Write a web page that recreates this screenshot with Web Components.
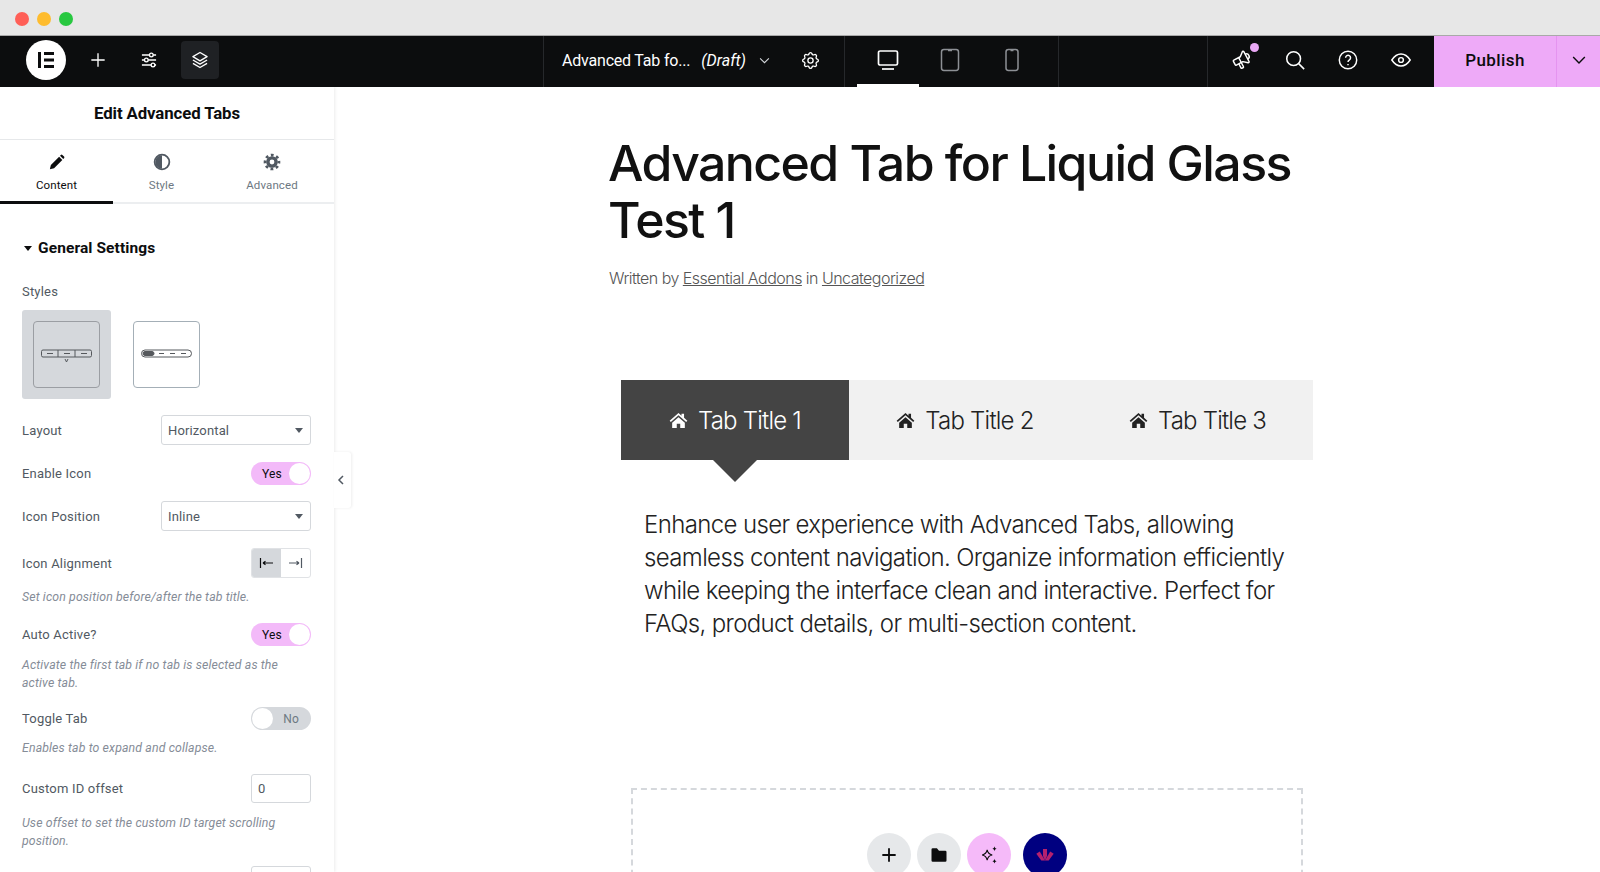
<!DOCTYPE html>
<html lang="en">
<head>
<meta charset="utf-8">
<title>Edit Advanced Tabs</title>
<style>
  html, body { margin: 0; height: 100%; overflow: hidden; background: #fff; }
  body { font-family: "Roboto", "Liberation Sans", sans-serif; display: flex; flex-direction: column; height: 872px; }
</style>
</head>
<body>
<window-bar></window-bar>
<editor-topbar></editor-topbar>
<editor-body>
  <editor-panel slot="panel"></editor-panel>
  <page-preview slot="page"></page-preview>
</editor-body>

<script>
// shared svg icons, all on a 24 box unless they say otherwise
const icons = {
  plus: `<svg viewBox="0 0 24 24" fill="none" stroke="currentColor" stroke-width="1.6"><path d="M12 4v16M4 12h16"/></svg>`,
  sliders: `<svg viewBox="0 0 24 24" fill="none" stroke="currentColor" stroke-width="1.6"><path d="M3.5 6h9M17 6h3.5M3.5 12h3M11 12h9.5M3.5 18h11M19 18h1.5"/><circle cx="14.8" cy="6" r="2.2"/><circle cx="8.8" cy="12" r="2.2"/><circle cx="16.8" cy="18" r="2.2"/></svg>`,
  layers: `<svg viewBox="0 0 24 24" fill="none" stroke="currentColor" stroke-width="1.6" stroke-linejoin="round"><path d="M12 3l8.5 5-8.5 5-8.5-5z"/><path d="M3.5 12l8.5 5 8.5-5"/><path d="M3.5 16l8.5 5 8.5-5"/></svg>`,
  chevron: `<svg viewBox="0 0 24 24" fill="none" stroke="currentColor" stroke-width="1.7"><path d="M5 8.5l7 7 7-7"/></svg>`,
  gear: `<svg viewBox="0 0 24 24" fill="none" stroke="currentColor" stroke-width="1.5"><path d="M10.325 4.317c.426-1.756 2.924-1.756 3.35 0a1.724 1.724 0 0 0 2.573 1.066c1.543-.94 3.31.826 2.37 2.37a1.724 1.724 0 0 0 1.065 2.572c1.756.426 1.756 2.924 0 3.35a1.724 1.724 0 0 0-1.066 2.573c.94 1.543-.826 3.31-2.37 2.37a1.724 1.724 0 0 0-2.572 1.065c-.426 1.756-2.924 1.756-3.35 0a1.724 1.724 0 0 0-2.573-1.066c-1.543.94-3.31-.826-2.37-2.37a1.724 1.724 0 0 0-1.065-2.572c-1.756-.426-1.756-2.924 0-3.35a1.724 1.724 0 0 0 1.066-2.573c-.94-1.543.826-3.31 2.37-2.37c1 .608 2.296.07 2.572-1.065z"/><circle cx="12" cy="12" r="3"/></svg>`,
  desktop: `<svg viewBox="0 0 24 24" fill="none" stroke="currentColor" stroke-width="1.7"><rect x="2.5" y="3" width="19" height="14" rx="1.6"/><path d="M6 21h12"/></svg>`,
  tablet: `<svg viewBox="0 0 24 24" fill="none" stroke="currentColor" stroke-width="1.5"><rect x="3.5" y="1.5" width="17" height="21" rx="2.4"/><path d="M10 2.5h4"/></svg>`,
  phone: `<svg viewBox="0 0 24 24" fill="none" stroke="currentColor" stroke-width="1.5"><rect x="6" y="1.5" width="12" height="21" rx="2.4"/><path d="M10.5 2.5h3"/></svg>`,
  megaphone: `<svg viewBox="0 0 24 24" fill="none" stroke="currentColor" stroke-width="1.6" stroke-linejoin="round"><g transform="rotate(-28 12 12)"><path d="M18 8a3 3 0 0 1 0 6"/><path d="M10 8v11a1 1 0 0 1-1 1h-1a1 1 0 0 1-1-1v-5"/><path d="M12 8l4.524-3.77a.9.9 0 0 1 1.476.692v12.156a.9.9 0 0 1-1.476.692l-4.524-3.77h-8a1 1 0 0 1-1-1v-4a1 1 0 0 1 1-1z"/></g></svg>`,
  search: `<svg viewBox="0 0 24 24" fill="none" stroke="currentColor" stroke-width="1.7"><circle cx="10.5" cy="10.5" r="7.5"/><path d="M16 16l6 6"/></svg>`,
  help: `<svg viewBox="0 0 24 24" fill="none" stroke="currentColor" stroke-width="1.6"><circle cx="12" cy="12" r="9.5"/><path d="M9.4 9.6a2.7 2.7 0 1 1 4.2 2.3c-.9.6-1.6 1.1-1.6 2.3"/><path d="M12 16.4v1.3"/></svg>`,
  eye: `<svg viewBox="0 0 24 24" fill="none" stroke="currentColor" stroke-width="1.6"><path d="M2 12c2.6-4 6-6.5 10-6.5S19.4 8 22 12c-2.6 4-6 6.5-10 6.5S4.6 16 2 12z"/><circle cx="12" cy="12" r="2.6"/></svg>`,
  pencil: `<svg viewBox="0 0 24 24" fill="currentColor"><path d="M2.5 21.5l1.3-5.6L14.8 4.900l4.300 4.300L8.100 20.200z"/><path d="M16 3.700l1.100-1.100a1.500 1.500 0 0 1 2.100 0l2.200 2.200a1.500 1.500 0 0 1 0 2.100l-1.100 1.100z"/></svg>`,
  halfCircle: `<svg viewBox="0 0 24 24"><circle cx="12" cy="12" r="9.8" fill="none" stroke="currentColor" stroke-width="2.4"/><path d="M12 3a9 9 0 0 0 0 18z" fill="currentColor"/></svg>`,
  cog: `<svg viewBox="0 0 24 24" fill="none" stroke="currentColor"><circle cx="12" cy="12" r="5.5" stroke-width="4.6"/><circle cx="12" cy="12" r="9.3" stroke-width="3.6" stroke-dasharray="3.7 3.6" stroke-dashoffset="1.8"/></svg>`,
  home: `<svg viewBox="0 0 24 24" fill="currentColor"><path d="M12 2.5L.8 12.200l1.500 1.700L12 5.500l9.700 8.400 1.500-1.700-4.200-3.600V3.500h-3.200v2.400z"/><path d="M12 7.800l-8 6.900V21.500h5.800v-5.300h4.400v5.300H20v-6.800z"/></svg>`,
  folder: `<svg viewBox="0 0 24 24" fill="currentColor"><path d="M3 5.500A1.500 1.500 0 0 1 4.500 4h5l2.500 3h7.500A1.500 1.500 0 0 1 21 8.500v10a1.500 1.500 0 0 1-1.500 1.500h-15A1.500 1.500 0 0 1 3 18.500z"/></svg>`,
  sparkle: `<svg viewBox="0 0 24 24"><path d="M10 6.500c.7 3.500 2 4.800 5.500 5.500-3.500.7-4.800 2-5.500 5.500-.7-3.500-2-4.800-5.500-5.500 3.500-.7 4.800-2 5.500-5.500z" fill="none" stroke="currentColor" stroke-width="1.2"/><path d="M18 2.500c.3 1.700 1 2.400 2.500 2.700-1.500.3-2.200 1-2.500 2.700-.3-1.700-1-2.400-2.500-2.700 1.500-.3 2.200-1 2.500-2.700zM18 16c.3 1.700 1 2.400 2.500 2.700-1.500.3-2.200 1-2.500 2.700-.3-1.700-1-2.400-2.500-2.700 1.500-.3 2.200-1 2.500-2.700z" fill="currentColor"/></svg>`,
  brand: `<svg viewBox="0 0 24 24" fill="#b5216e"><path d="M9.800 5.500h4.400v7.500l-2.200 5-2.200-5z"/><path d="M2.500 10.500l3.800-2.300 3.200 5.300 2.500 4.500H8z"/><path d="M21.500 10.500l-3.800-2.300-3.200 5.300-2.500 4.500h4z"/></svg>`
};

// grey traffic light strip on top of the screenshot
class WindowBar extends HTMLElement {
  constructor() {
    super();
    this.attachShadow({ mode: "open" }).innerHTML = `
      <style>
        :host { display: flex; flex: none; height: 36px; align-items: center; gap: 8px; padding: 2px 0 0 15px; box-sizing: border-box; background: #e7e7e7; border-bottom: 1px solid #a9a9a9; }
        i { width: 14px; height: 14px; border-radius: 50%; }
      </style>
      <i style="background:#ff5f57"></i><i style="background:#febc2e"></i><i style="background:#28c840"></i>`;
  }
}

class EditorTopbar extends HTMLElement {
  constructor() {
    super();
    this.attachShadow({ mode: "open" }).innerHTML = `
      <style>
        :host { display: flex; flex: none; height: 51px; background: #0c0d0e; color: #fff; font-family: "Roboto", sans-serif; }
        svg { display: block; }
        .left { width: 543px; display: flex; align-items: center; padding: 0 0 3px 26px; box-sizing: border-box; flex: none; }
        .logo { width: 40px; height: 40px; border-radius: 50%; background: #fff; display: grid; place-items: center; }
        .logo svg { width: 18px; height: 18px; }
        .tool { width: 38px; height: 38px; display: grid; place-items: center; border-radius: 4px; }
        .tool svg { width: 20px; height: 20px; }
        .tool.plus { margin-left: 13px; }
        .tool.sl { margin-left: 13px; }
        .tool.on { background: #1f2124; margin-left: 13px; }
        .doc { width: 301px; flex: none; display: flex; align-items: center; box-sizing: border-box; padding: 0 0 3px 18px; border-left: 1px solid #26282b; font-size: 16px; }
        .doc .name { letter-spacing: -.2px; }
        .doc em { margin-left: 11px; }
        .doc .chev { width: 15px; height: 15px; margin-left: 11px; color: #d5d8dc; }
        .doc .gear { width: 21px; height: 21px; margin-left: 28px; }
        .devices { width: 215px; flex: none; display: flex; border-left: 1px solid #26282b; border-right: 1px solid #26282b; box-sizing: border-box; padding-left: 12px; }
        .dev { width: 62px; display: grid; place-items: center; color: #8d9095; box-sizing: border-box; padding-bottom: 3px; }
        .dev svg { width: 24px; height: 24px; }
        .dev.on { color: #fff; box-shadow: inset 0 -3px 0 #fff; }
        .gap { flex: none; width: 148px; }
        .actions { flex: none; width: 227px; display: flex; align-items: center; border-left: 1px solid #26282b; padding: 0 0 3px 23px; gap: 31px; box-sizing: border-box; }
        .actions span { position: relative; display: block; width: 22px; height: 22px; }
        .actions svg { width: 22px; height: 22px; }
        .dot { position: absolute; top: -6px; right: -6px; width: 9px; height: 9px; border-radius: 50%; background: #eaa8f5; }
        .publish { flex: 1; display: flex; background: #eeaaf8; color: #0c0d0e; font-size: 17px; font-weight: 500; letter-spacing: .4px; }
        .publish b { font-weight: 500; width: 122px; display: grid; place-items: center; padding-bottom: 3px; box-sizing: border-box; }
        .publish span { flex: 1; display: grid; place-items: center; border-left: 1px solid #e594f0; padding-bottom: 3px; }
        .publish svg { width: 20px; height: 20px; }
      </style>
      <div class="left">
        <div class="logo"><svg viewBox="0 0 18 18" fill="#0c0d0e"><rect x="1" y="1" width="3" height="16"/><rect x="7" y="1" width="10" height="3"/><rect x="7" y="7.5" width="10" height="3"/><rect x="7" y="14" width="10" height="3"/></svg></div>
        <div class="tool plus">${icons.plus}</div>
        <div class="tool sl">${icons.sliders}</div>
        <div class="tool on">${icons.layers}</div>
      </div>
      <div class="doc"><span class="name">Advanced Tab fo...</span><em>(Draft)</em><span class="chev">${icons.chevron}</span><span class="gear">${icons.gear}</span></div>
      <div class="devices">
        <div class="dev on">${icons.desktop}</div><div class="dev">${icons.tablet}</div><div class="dev">${icons.phone}</div>
      </div>
      <div class="gap"></div>
      <div class="actions">
        <span>${icons.megaphone}<i class="dot"></i></span><span>${icons.search}</span><span>${icons.help}</span><span>${icons.eye}</span>
      </div>
      <div class="publish"><b>Publish</b><span>${icons.chevron}</span></div>`;
  }
}

class EditorBody extends HTMLElement {
  constructor() {
    super();
    this.attachShadow({ mode: "open" }).innerHTML = `
      <style>
        :host { display: flex; flex: 1; min-height: 0; position: relative; overflow: hidden; }
        .handle { position: absolute; left: 334px; top: 365px; width: 17px; height: 56px; background: #fff; box-shadow: 1px 0 3px rgba(0,0,0,.07); display: grid; place-items: center; border-radius: 0 3px 3px 0; }
        .handle svg { width: 10px; height: 10px; color: #515962; margin-right: 3px; }
      </style>
      <slot name="panel"></slot>
      <slot name="page"></slot>
      <div class="handle"><svg viewBox="0 0 10 10" fill="none" stroke="currentColor" stroke-width="1.5"><path d="M7 1L3 5l4 4"/></svg></div>`;
  }
}

class ToggleSwitch extends HTMLElement {
  constructor() {
    super();
    const on = this.hasAttribute("on");
    this.attachShadow({ mode: "open" }).innerHTML = `
      <style>
        :host { display: flex; width: 60px; height: 23px; border-radius: 12px; box-sizing: border-box; align-items: center; font: 12px "Roboto", sans-serif; position: relative; background: ${on ? "#f3baf9" : "#d5d8dc"}; color: ${on ? "#0c0d0e" : "#6d7882"}; justify-content: ${on ? "flex-start" : "flex-end"}; padding: 0 ${on ? "0 0 11px" : "12px 0 0"}; }
        i { position: absolute; top: 1px; ${on ? "right: 1px" : "left: 1px"}; width: 21px; height: 21px; background: #fff; border-radius: 50%; }
      </style>
      <span>${on ? "Yes" : "No"}</span><i></i>`;
  }
}

class SelectBox extends HTMLElement {
  constructor() {
    super();
    this.attachShadow({ mode: "open" }).innerHTML = `
      <style>
        :host { display: flex; width: 150px; height: 30px; box-sizing: border-box; align-items: center; justify-content: space-between; padding: 0 7px 0 6px; border: 1px solid #d5d8dc; border-radius: 3px; font: 13px "Roboto", sans-serif; color: #515962; letter-spacing: .15px; }
        i { width: 0; height: 0; border: 4.5px solid transparent; border-top: 5px solid #515962; border-bottom: 0; }
      </style>
      <slot></slot><i></i>`;
  }
}

// one label + control line of the settings panel
class PanelRow extends HTMLElement {
  constructor() {
    super();
    this.attachShadow({ mode: "open" }).innerHTML = `
      <style>
        :host { display: flex; align-items: center; justify-content: space-between; color: #515962; font: 13px "Roboto", sans-serif; letter-spacing: .2px; }
        ::slotted(*) { flex: none; }
      </style>
      <span><slot name="label"></slot></span><slot></slot>`;
  }
}

class PanelHint extends HTMLElement {
  constructor() {
    super();
    this.attachShadow({ mode: "open" }).innerHTML = `
      <style>:host { display: block; font: italic 12.3px/18px "Roboto", sans-serif; color: #858c97; letter-spacing: .13px; }</style>
      <slot></slot>`;
  }
}

class EditorPanel extends HTMLElement {
  constructor() {
    super();
    this.attachShadow({ mode: "open" }).innerHTML = `
      <style>
        :host { display: flex; flex-direction: column; width: 334px; flex: none; box-sizing: border-box; overflow: hidden; background: #fff; box-shadow: 1px 0 3px rgba(0,0,0,.08); font-family: "Roboto", sans-serif; position: relative; }
        header { height: 53px; display: grid; place-items: center; border-bottom: 1px solid #e6e8ea; font-size: 16.8px; font-weight: 700; color: #0c0d0e; letter-spacing: -.1px; flex: none; box-sizing: border-box; padding-bottom: 1px; }
        nav { height: 64px; display: grid; grid-template-columns: 113px 97px 124px; border-bottom: 2px solid #eceef0; box-sizing: border-box; flex: none; }
        nav div { display: flex; flex-direction: column; align-items: center; padding-top: 13px; font-size: 11.5px; color: #6d7882; gap: 7px; box-sizing: border-box; margin-bottom: -2px; letter-spacing: .1px; }
        nav div.on { color: #0c0d0e; border-bottom: 3px solid #0c0d0e; }
        nav svg { width: 18px; height: 18px; display: block; }
        .body { padding: 0 23px 0 22px; flex: 1; display: flex; flex-direction: column; }
        h3 { margin: 35px 0 0; font-size: 15.5px; line-height: 18px; font-weight: 700; color: #0c0d0e; display: flex; align-items: center; gap: 6px; letter-spacing: .1px; }
        h3 i { width: 0; height: 0; border: 4px solid transparent; border-top: 5px solid #0c0d0e; border-bottom: 0; margin-left: 2px; }
        .styles-label { margin-top: 27px; color: #515962; font-size: 13px; line-height: 16px; letter-spacing: .2px; }
        .styles { display: flex; align-items: center; gap: 22px; margin-top: 10px; }
        .pick { width: 89px; height: 89px; background: #d5d8dc; border-radius: 3px; display: grid; place-items: center; }
        .thumb { width: 67px; height: 67px; box-sizing: border-box; border: 1px solid #a4afb7; border-radius: 4px; display: grid; place-items: center; background: #fff; }
        .pick .thumb { background: transparent; border-color: #9b9ea3; }
        .thumb svg { width: 51px; height: 16px; display: block; margin-top: -2px; }
        .aligns { display: flex; width: 60px; height: 30px; box-sizing: border-box; border: 1px solid #e0e2e5; border-radius: 3px; overflow: hidden; }
        .aligns span { flex: 1; display: grid; place-items: center; color: #515962; }
        .aligns span.on { background: #d5d8dc; color: #0c0d0e; }
        .aligns svg { width: 15px; height: 10px; display: block; }
        .numbox { width: 60px; height: 29px; box-sizing: border-box; border: 1px solid #d5d8dc; border-radius: 3px; padding: 0 6px; display: flex; align-items: center; color: #515962; }
        .numbox.cut { margin-left: auto; margin-top: 16px; flex: none; }
      </style>
      <header>Edit Advanced Tabs</header>
      <nav>
        <div class="on">${icons.pencil}<span>Content</span></div>
        <div><span style="color:#515962">${icons.halfCircle}</span><span>Style</span></div>
        <div><span style="color:#515962">${icons.cog}</span><span>Advanced</span></div>
      </nav>
      <div class="body">
        <h3><i></i>General Settings</h3>
        <div class="styles-label">Styles</div>
        <div class="styles">
          <div class="pick"><div class="thumb">
            <svg viewBox="0 0 51 16" fill="none" stroke="#55585c" stroke-width="1"><rect x=".5" y="4" width="50" height="7" rx="1.5"/><path d="M17 4v7M34 4v7M6 7.500h6M23 7.500h6M40 7.500h6M24 13l1.500 3 1.500-3"/></svg>
          </div></div>
          <div class="thumb">
            <svg viewBox="0 0 51 16" fill="none" stroke="#55585c" stroke-width="1"><rect x=".5" y="4" width="50" height="7" rx="3.5"/><rect x="2" y="5.500" width="11" height="4" rx="2" fill="#55585c"/><path d="M18 7.500h5M29 7.500h5M40 7.500h5"/></svg>
          </div>
        </div>
        <panel-row style="margin-top:16px"><span slot="label">Layout</span><select-box>Horizontal</select-box></panel-row>
        <panel-row style="margin-top:17px"><span slot="label">Enable Icon</span><toggle-switch on></toggle-switch></panel-row>
        <panel-row style="margin-top:16px"><span slot="label">Icon Position</span><select-box>Inline</select-box></panel-row>
        <panel-row style="margin-top:17px"><span slot="label">Icon Alignment</span>
          <div class="aligns">
            <span class="on"><svg viewBox="0 0 15 10" fill="none" stroke="currentColor" stroke-width="1.2"><path d="M1.500 0v10M4 5h10M4 5l2.500-1.800M4 5l2.500 1.800"/></svg></span>
            <span><svg viewBox="0 0 15 10" fill="none" stroke="currentColor" stroke-width="1.2"><path d="M13.500 0v10M1 5h10M11 5L8.500 3.200M11 5L8.500 6.800"/></svg></span>
          </div>
        </panel-row>
        <panel-hint style="margin-top:10px">Set icon position before/after the tab title.</panel-hint>
        <panel-row style="margin-top:17px"><span slot="label">Auto Active?</span><toggle-switch on></toggle-switch></panel-row>
        <panel-hint style="margin-top:10px">Activate the first tab if no tab is selected as the<br>active tab.</panel-hint>
        <panel-row style="margin-top:15px"><span slot="label">Toggle Tab</span><toggle-switch></toggle-switch></panel-row>
        <panel-hint style="margin-top:9px">Enables tab to expand and collapse.</panel-hint>
        <panel-row style="margin-top:17px"><span slot="label">Custom ID offset</span><div class="numbox">0</div></panel-row>
        <panel-hint style="margin-top:11px">Use offset to set the custom ID target scrolling position.</panel-hint>
        <div class="numbox cut"></div>
      </div>`;
  }
}

class AdvancedTabs extends HTMLElement {
  constructor() {
    super();
    this.attachShadow({ mode: "open" }).innerHTML = `
      <style>
        :host { display: block; font-family: "Inter", sans-serif; }
        .bar { display: grid; grid-template-columns: 228px 230px 1fr; height: 80px; background: #f1f1f1; }
        .tab { display: flex; align-items: center; justify-content: center; gap: 10px; font-size: 24px; font-weight: 300; letter-spacing: -.78px; color: #222; position: relative; }
        .tab svg { width: 19px; height: 19px; display: block; }
        .tab.on { background: #444; color: #fff; }
        .tab.on::after { content: ""; position: absolute; top: 100%; left: 92px; border: 22px solid transparent; border-top: 22px solid #444; border-bottom: 0; }
        .tab.two { padding-left: 2px; }
        .tab.three { padding-left: 3px; }
        p { margin: 48px 0 0 23px; width: 650px; font-size: 24px; line-height: 33px; font-weight: 300; letter-spacing: -.63px; color: #222; }
      </style>
      <div class="bar">
        <div class="tab on">${icons.home}<span>Tab Title 1</span></div>
        <div class="tab two">${icons.home}<span>Tab Title 2</span></div>
        <div class="tab three">${icons.home}<span>Tab Title 3</span></div>
      </div>
      <p>Enhance user experience with Advanced Tabs, allowing seamless content navigation. Organize information efficiently while keeping the interface clean and interactive. Perfect for FAQs, product details, or multi-section content.</p>`;
  }
}

class DropZone extends HTMLElement {
  constructor() {
    super();
    this.attachShadow({ mode: "open" }).innerHTML = `
      <style>
        :host { display: flex; justify-content: center; gap: 6px; height: 200px; box-sizing: border-box; border: 2px dashed #d5d8dc; border-bottom: 0; padding: 43px 0 0 0; }
        span { width: 44px; height: 44px; border-radius: 50%; display: grid; place-items: center; background: #e6e8ea; color: #0c0d0e; }
        span.ai { background: #f5baf9; }
        span.brand { background: #000080; margin-left: 6px; }
        svg { width: 20px; height: 20px; display: block; }
        span.add svg { stroke-width: 2.2; }
        span.ai svg, span.brand svg { width: 22px; height: 22px; }
      </style>
      <span class="add">${icons.plus}</span><span>${icons.folder}</span><span class="ai">${icons.sparkle}</span><span class="brand">${icons.brand}</span>`;
  }
}

class PagePreview extends HTMLElement {
  constructor() {
    super();
    this.attachShadow({ mode: "open" }).innerHTML = `
      <style>
        :host { display: block; flex: 1; min-width: 0; font-family: "Inter", sans-serif; color: #111; }
        .wrap { margin-left: 275px; width: 704px; padding-top: 48px; }
        h1 { margin: 0 0 0 -1px; font-size: 50px; line-height: 57px; font-weight: 500; letter-spacing: -1.58px; color: #111; }
        .meta { margin: 17px 0 0 0; font-size: 16px; line-height: 24px; font-weight: 300; letter-spacing: -.52px; color: #555; }
        .meta a { color: inherit; text-decoration: underline; }
        advanced-tabs { margin: 90px 0 0 12px; width: 692px; }
        drop-zone { margin: 0 0 0 22px; width: 672px; }
        .spacer { height: 148px; }
      </style>
      <div class="wrap">
        <h1>Advanced Tab for Liquid Glass<br>Test 1</h1>
        <div class="meta">Written by <a>Essential Addons</a> in <a>Uncategorized</a></div>
        <advanced-tabs></advanced-tabs>
        <div class="spacer"></div>
        <drop-zone></drop-zone>
      </div>`;
  }
}

customElements.define("window-bar", WindowBar);
customElements.define("editor-topbar", EditorTopbar);
customElements.define("editor-body", EditorBody);
customElements.define("toggle-switch", ToggleSwitch);
customElements.define("select-box", SelectBox);
customElements.define("panel-row", PanelRow);
customElements.define("panel-hint", PanelHint);
customElements.define("editor-panel", EditorPanel);
customElements.define("advanced-tabs", AdvancedTabs);
customElements.define("drop-zone", DropZone);
customElements.define("page-preview", PagePreview);
</script>
</body>
</html>
